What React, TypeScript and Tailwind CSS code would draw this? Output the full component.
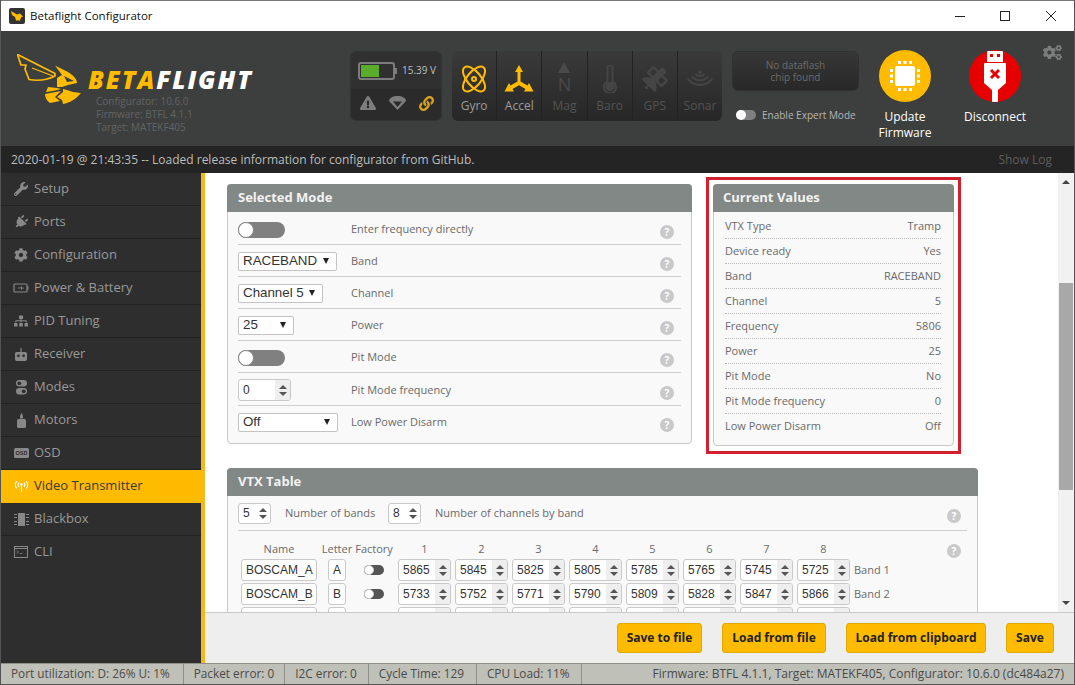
import React from "react";
import { FaWrench, FaPlug, FaCog, FaSitemap, FaExclamationTriangle, FaLink, FaCogs, FaSatellite } from "react-icons/fa";

const Battery = () => (
  <svg width="16" height="12" viewBox="0 0 16 12" fill="none" stroke="currentColor" strokeWidth="1.2">
    <rect x="1" y="2" width="13" height="8" rx="1" />
    <path d="M15 4.500v3" />
    <path d="M5 6h2.500l1-1.500v3l1-1.500h1.500" strokeWidth="0.8" />
  </svg>
);
const Receiver = () => (
  <svg width="12" height="15" viewBox="0 0 14 15" fill="currentColor">
    <rect x="6.300" y="0" width="1.400" height="5" />
    <path d="M2 4.500h10a2 2 0 0 1 2 2V13a2 2 0 0 1-2 2H2a2 2 0 0 1-2-2V6.500a2 2 0 0 1 2-2Z" />
    <circle cx="4" cy="9" r="1.600" fill="#2e2e2e" />
    <circle cx="10" cy="9" r="1.600" fill="#2e2e2e" />
  </svg>
);
const Modes = () => (
  <svg width="13" height="15" viewBox="0 0 13 15" fill="currentColor">
    <rect x="1" y="0" width="11" height="6.600" rx="3.300" />
    <rect x="1" y="8" width="11" height="6.600" rx="3.300" />
    <circle cx="4.300" cy="3.300" r="1.900" fill="#2e2e2e" />
    <circle cx="8.700" cy="11.300" r="1.900" fill="#2e2e2e" />
  </svg>
);
const Motor = () => (
  <svg width="11" height="15" viewBox="0 0 11 15" fill="currentColor">
    <path d="M5.500 0C6.800 1.500 7 3 7 5.500H4C4 3 4.200 1.500 5.500 0Z" />
    <rect x="1" y="6" width="9" height="9" rx="1.500" />
  </svg>
);
const Osd = () => (
  <svg width="15" height="10" viewBox="0 0 15 10">
    <rect x="0" y="0" width="15" height="10" rx="1.500" fill="currentColor" />
    <text x="7.500" y="7" textAnchor="middle" fontSize="5.500" fontWeight="700" fontFamily="Liberation Sans" fill="#2e2e2e">OSD</text>
  </svg>
);
const Vtx = () => (
  <svg width="15" height="12" viewBox="0 0 15 12" fill="none" stroke="currentColor" strokeWidth="1.100">
    <circle cx="7.500" cy="4.500" r="1.200" fill="currentColor" stroke="none" />
    <path d="M7.500 5v7" />
    <path d="M5 2.500a3.500 3.500 0 0 0 0 4.500M10 2.500a3.500 3.500 0 0 1 0 4.500" />
    <path d="M2.800 1a6 6 0 0 0 0 7.500M12.200 1a6 6 0 0 1 0 7.500" />
  </svg>
);
const Blackbox = () => (
  <svg width="15" height="13" viewBox="0 0 15 13" fill="currentColor">
    <rect x="4" y="0" width="7" height="13" rx="0.500" />
    <path d="M0 1h3v1H0zM0 4h3v1H0zM0 8h3v1H0zM0 11h3v1H0zM12 1h3v1h-3zM12 4h3v1h-3zM12 8h3v1h-3zM12 11h3v1h-3z" />
  </svg>
);
const Cli = () => (
  <svg width="14" height="12" viewBox="0 0 14 12" fill="none" stroke="currentColor">
    <rect x="0.500" y="0.500" width="13" height="11" />
    <path d="M0.500 2.500h13" />
    <path d="M2.500 4.500l2 1.500-2 1.500M5.500 7.500h3" strokeWidth="0.700" />
  </svg>
);

const Wasp = () => (
  <svg width="65" height="50" viewBox="0 0 65 50" fill="#ffbb00" className="shrink-0">
    <path d="M0.500 0.500 L38 19.500 L38 22 C30 26 20 27 12 25.500 L8 15 L9 11 L4 11 Z" fill="none" stroke="#ffbb00" strokeWidth="1.700" strokeLinejoin="round" />
    <path d="M15 14 L36 22" fill="none" stroke="#ffbb00" strokeWidth="1.300" />
    <path d="M38 11.500 L51 18 C56 21 60 25 60 29 L51 31 L45 33 L40 33 L40 24 L45 21 Z" />
    <path d="M47 22 L57 27 L50 28 Z" fill="#3d3f3e" />
    <path d="M31 33 L40 34 L44 35 L36 37 L29 38 Z" />
    <path d="M28 40 L44 37 L38 43 L43 47 L33 49 C30 47 28 44 28 40 Z" />
    <path d="M46 35 L50 36 L56 38 L64 39 C60 44 53 49 46 50 L45 46 L40 43 L46 38 Z" />
  </svg>
);

const Thermo = () => (
  <svg width="16" height="28" viewBox="0 0 18 34" fill="none" stroke="#454545" strokeWidth="2.400">
    <path d="M6 3a3 3 0 0 1 6 0v17a7.500 7.500 0 1 1-6 0Z" />
    <circle cx="9" cy="26" r="4.500" fill="#454545" />
  </svg>
);
const Accel = () => (
  <svg width="30" height="28" viewBox="0 0 30 28" fill="#ffbb00">
    <path d="M15 0l4 7h-2.500v9.500l7 4 1.500-2.500 4.500 8.500H20l1.500-2.500-6.500-3.700-6.500 3.700L10 26.500H.5L5 18l1.500 2.500 7-4V7H11Z" />
  </svg>
);
const Compass = () => (
  <div className="flex flex-col items-center -mt-[3px]">
    <div className="w-0 h-0 border-l-[6px] border-r-[6px] border-b-[11px] border-l-transparent border-r-transparent border-b-[#4a4a4a]" />
    <span className="mt-[1px] text-[18px] leading-[20px] text-[#4a4a4a]">N</span>
  </div>
);
const Sonar = () => (
  <svg width="28" height="21" viewBox="0 0 30 22" fill="none" stroke="#454545" strokeWidth="2.200">
    <circle cx="15" cy="3" r="2" fill="#454545" stroke="none" />
    <path d="M10 5c2 3 8 3 10 0" />
    <path d="M6 8c4 5 14 5 18 0" />
    <path d="M2 10c6 9 20 9 26 0" />
  </svg>
);
const Parachute = () => (
  <svg width="17" height="14" viewBox="0 0 17 14" fill="#7d7d7d">
    <path d="M8.500 0C13 0 17 2 17 5l-8.500 9L0 5C0 2 4 0 8.500 0Z" />
    <path d="M4 5.500h9L8.500 11Z" fill="#2a2a2a" />
  </svg>
);
const Chip = () => (
  <svg width="30" height="30" viewBox="0 0 30 30" fill="#fff">
    <rect x="5" y="5" width="20" height="20" rx="2" />
    <path d="M8 0h3v3H8zM13.500 0h3v3h-3zM19 0h3v3h-3zM8 27h3v3H8zM13.500 27h3v3h-3zM19 27h3v3h-3zM0 8h3v3H0zM0 13.500h3v3H0zM0 19h3v3H0zM27 8h3v3h-3zM27 13.500h3v3h-3zM27 19h3v3h-3z" />
  </svg>
);
const Usb = () => (
  <svg width="24" height="52" viewBox="0 0 24 52" fill="#fff">
    <path d="M4 1h16v11H4Z M7 4v3h3V4Z M14 4v3h3V4Z" fillRule="evenodd" />
    <path d="M2 13h20a1 1 0 0 1 1 1v19l-8 7v12h-6V40l-8-7V14a1 1 0 0 1 1-1Z" />
    <path d="M8 20l8 8M16 20l-8 8" stroke="#e60000" strokeWidth="3" />
  </svg>
);

const Help = ({ className = "" }: { className?: string }) => (
  <div className={`w-[14px] h-[14px] rounded-full bg-[#c9c9c9] text-white text-[10px] leading-[14px] font-bold text-center shrink-0 ${className}`}>?</div>
);

const Toggle = () => (
  <div className="w-[47px] h-[16px] rounded-full bg-[#808080] flex items-center">
    <div className="w-[16px] h-[16px] rounded-full bg-white border border-[#8a8a8a]" />
  </div>
);

const MiniToggle = () => (
  <div className="w-[20px] h-[10px] rounded-full flex items-center bg-[#555]">
    <div className="w-[10px] h-[10px] rounded-full bg-white border border-[#ccc]" />
  </div>
);

const Select = ({ value, w }: { value: string; w: string }) => (
  <div className={`${w} h-[19px] border border-[#c4c4c4] rounded-[2px] bg-white pl-[4px] pr-[7px] flex items-center justify-between font-['Liberation_Sans'] text-[13.33px] text-[#333] mb-[1px]`}>
    <span>{value}</span>
    <span className="w-0 h-0 border-l-[3px] border-r-[3px] border-t-[6px] border-l-transparent border-r-transparent border-t-[#222]" />
  </div>
);

const Arrows = ({ bg = "bg-[#eeeeee]" }: { bg?: string }) => (
  <div className={`w-[15px] self-stretch ${bg} flex flex-col items-center justify-center gap-[3px] rounded-r-[3px]`}>
    <span className="w-0 h-0 border-l-[4px] border-r-[4px] border-b-[4px] border-l-transparent border-r-transparent border-b-[#555]" />
    <span className="w-0 h-0 border-l-[4px] border-r-[4px] border-t-[4px] border-l-transparent border-r-transparent border-t-[#555]" />
  </div>
);

const Spin = ({ value, w, h = "h-[22px]", bg }: { value: string; w: string; h?: string; bg?: string }) => (
  <div className={`${w} ${h} shrink-0 border border-[#c9c9c9] rounded-[3px] bg-white flex items-center justify-between pl-[4px] font-['Liberation_Sans'] text-[12px] text-[#333]`}>
    <span>{value}</span>
    <Arrows bg={bg} />
  </div>
);

const Panel = ({ title, className, titlePad = "pl-[11px]", children }: { title: string; className: string; titlePad?: string; children: React.ReactNode }) => (
  <div className={`${className} shrink-0 border border-[#c8c8c8] rounded-[4px] bg-[#f9f9f9]`}>
    <div className={`h-[28px] -mt-px -mx-px bg-[#828885] rounded-t-[4px] ${titlePad} flex items-center text-[13px] font-bold text-[#f2f2f2]`}>{title}</div>
    {children}
  </div>
);

const modes: [React.ReactNode, string][] = [
  [<Toggle />, "Enter frequency directly"],
  [<Select value="RACEBAND" w="w-[99px]" />, "Band"],
  [<Select value="Channel 5" w="w-[85px]" />, "Channel"],
  [<Select value="25" w="w-[56px]" />, "Power"],
  [<Toggle />, "Pit Mode"],
  [<Spin value="0" w="w-[53px]" />, "Pit Mode frequency"],
  [<Select value="Off" w="w-[100px]" />, "Low Power Disarm"],
];

const values = [
  ["VTX Type", "Tramp"],
  ["Device ready", "Yes"],
  ["Band", "RACEBAND"],
  ["Channel", "5"],
  ["Frequency", "5806"],
  ["Power", "25"],
  ["Pit Mode", "No"],
  ["Pit Mode frequency", "0"],
  ["Low Power Disarm", "Off"],
];

const bands = [
  { name: "BOSCAM_A", letter: "A", f: ["5865", "5845", "5825", "5805", "5785", "5765", "5745", "5725"], label: "Band 1" },
  { name: "BOSCAM_B", letter: "B", f: ["5733", "5752", "5771", "5790", "5809", "5828", "5847", "5866"], label: "Band 2" },
  { name: "", letter: "", f: ["", "", "", "", "", "", "", ""], label: "" },
];

const nav: [React.ReactNode, string][] = [
  [<FaWrench size={14} />, "Setup"],
  [<FaPlug size={14} className="rotate-45" />, "Ports"],
  [<FaCog size={14} />, "Configuration"],
  [<Battery />, "Power & Battery"],
  [<FaSitemap size={14} />, "PID Tuning"],
  [<Receiver />, "Receiver"],
  [<Modes />, "Modes"],
  [<Motor />, "Motors"],
  [<Osd />, "OSD"],
  [<Vtx />, "Video Transmitter"],
  [<Blackbox />, "Blackbox"],
  [<Cli />, "CLI"],
];

const sensors: [React.ReactNode, string, boolean][] = [
  [
    <svg width="28" height="30" viewBox="0 0 28 30" fill="none" stroke="#ffbb00" strokeWidth="2">
      <ellipse cx="14" cy="15" rx="7" ry="15" transform="rotate(-40 14 15)" />
      <ellipse cx="14" cy="15" rx="7" ry="15" transform="rotate(40 14 15)" />
      <circle cx="14" cy="15" r="2" />
    </svg>,
    "Gyro",
    true,
  ],
  [<Accel />, "Accel", true],
  [<Compass />, "Mag", false],
  [<Thermo />, "Baro", false],
  [<FaSatellite size={26} color="#454545" />, "GPS", false],
  [<Sonar />, "Sonar", false],
];

const actions: [string, string][] = [
  ["Save to file", "w-[85px]"],
  ["Load from file", "w-[104px]"],
  ["Load from clipboard", "w-[140px]"],
  ["Save", "w-[48px]"],
];

const stats: [string, string][] = [
  ["Port utilization: D: 26% U: 1%", "pr-[13px]"],
  ["Packet error: 0", "pr-[10px]"],
  ["I2C error: 0", "pr-[11px]"],
  ["Cycle Time: 129", "pr-[12px]"],
  ["CPU Load: 11%", "pr-[11px]"],
];

export default function App() {
  return (
    <div className="w-[1075px] h-[685px] flex flex-col overflow-hidden bg-white border-x border-b border-[#555] font-['Open_Sans',sans-serif]">
      <div className="h-[31px] shrink-0 border-t border-[#777] bg-white flex items-center pl-[8px]">
        <div className="w-[16px] h-[16px] bg-[#333] rounded-[2px] flex items-center justify-center">
          <svg width="12" height="10" viewBox="0 0 12 10" fill="#ffbb00"><path d="M0 0l6 3.500 3-1 3 3-2 1-1 3H5L4 6 1 4Z" /></svg>
        </div>
        <span className="ml-[5px] text-[11.500px] text-[#111]">Betaflight Configurator</span>
        <div className="ml-auto flex items-center mr-[18px]">
          <div className="w-[10px] h-px bg-[#222]" />
          <div className="ml-[35px] w-[10px] h-[10px] border border-[#222]" />
          <svg className="ml-[36px]" width="10" height="10" viewBox="0 0 10 10" stroke="#222"><path d="M0 0l10 10M10 0L0 10" /></svg>
        </div>
      </div>

      <div className="h-[115px] shrink-0 bg-[#3d3f3e] flex items-start">
        <div className="w-[349px] shrink-0 pl-[16px] pt-[23px] flex">
          <Wasp />
          <div className="pl-[6px] pt-[15px]">
            <div className="text-[25px] leading-[20px] font-extrabold italic tracking-[1.900px] whitespace-nowrap">
              <span className="text-[#ffbb00]">BETA</span><span className="text-white">FLIGHT</span>
            </div>
            <div className="ml-[8px] mt-[6px] text-[10px] leading-[13px] text-[#626463]">
              <div>Configurator: 10.6.0</div>
              <div>Firmware: BTFL 4.1.1</div>
              <div>Target: MATEKF405</div>
            </div>
          </div>
        </div>

        <div className="mt-[20px] w-[92px] h-[70px] shrink-0 rounded-[6px] bg-[#2b2b2b] border border-[#333] overflow-hidden flex flex-col">
          <div className="h-[37px] bg-[#303030] flex items-center pl-[7px]">
            <div className="w-[37px] h-[18px] border-2 border-[#7d7d7d] rounded-[3px] p-[1px]">
              <div className="w-[18px] h-full bg-[#59ad2a]" />
            </div>
            <div className="w-[2px] h-[6px] bg-[#7d7d7d]" />
            <span className="ml-[5px] text-[10px] text-[#bdbdbd]">15.39 V</span>
          </div>
          <div className="flex-1 flex items-center pl-[9px] gap-[13px] pb-[3px]">
            <FaExclamationTriangle size={16} color="#7d7d7d" />
            <Parachute />
            <FaLink size={15} color="#d9a21b" />
          </div>
        </div>

        <div className="mt-[20px] ml-[10px] w-[270px] h-[70px] shrink-0 rounded-[6px] bg-gradient-to-b from-[#3a3a3a] to-[#272727] flex overflow-hidden">
          {sensors.map(([icon, name, on], i) => (
            <div key={name} className={`flex-1 flex flex-col items-center ${i ? "border-l border-[#222]" : ""}`}>
              <div className="h-[38px] mt-[9px] flex items-center justify-center">{icon}</div>
              <span className={`text-[12px] leading-[16px] ${on ? "text-[#9c9c9c]" : "text-[#535353]"}`}>{name}</span>
            </div>
          ))}
        </div>

        <div className="ml-[10px] w-[127px] shrink-0 mt-[20px]">
          <div className="h-[40px] rounded-[6px] bg-gradient-to-b from-[#373737] to-[#282828] border border-[#303030] flex items-center justify-center text-center text-[10px] leading-[12px] text-[#6b6b6b]">
            No dataflash<br />chip found
          </div>
          <div className="mt-[14px] pl-[4px] flex items-center h-[20px]">
            <div className="w-[20px] h-[10px] rounded-full bg-[#808080] flex items-center">
              <div className="w-[10px] h-[10px] rounded-full bg-white" />
            </div>
            <span className="ml-[6px] text-[10px] text-[#b5b5b5] whitespace-nowrap">Enable Expert Mode</span>
          </div>
        </div>

        <div className="ml-[1px] w-[90px] shrink-0 mt-[19px] flex flex-col items-center">
          <div className="w-[52px] h-[52px] rounded-full bg-[#ffbb00] flex items-center justify-center"><Chip /></div>
          <div className="mt-[7px] text-[12px] leading-[16px] text-white text-center">Update<br />Firmware</div>
        </div>
        <div className="w-[90px] shrink-0 mt-[19px] flex flex-col items-center">
          <div className="w-[52px] h-[52px] rounded-full bg-[#e60000] flex items-center justify-center overflow-hidden"><Usb /></div>
          <div className="mt-[7px] text-[12px] leading-[16px] text-white text-center">Disconnect</div>
        </div>
        <FaCogs size={19} color="#7d7d7d" className="mt-[12px] ml-[3px]" />
      </div>

      <div className="h-[27px] shrink-0 bg-[#242424] flex items-center justify-between pl-[10px] pr-[22px] text-[12px]">
        <span className="text-[#bdbdbd]">2020-01-19 @ 21:43:35 -- Loaded release information for configurator from GitHub.</span>
        <span className="text-[#5e5e5e]">Show Log</span>
      </div>

      <div className="flex-1 min-h-0 flex">
        <div className="w-[200px] shrink-0 bg-[#2e2e2e]">
          {nav.map(([icon, label]) => {
            const active = label === "Video Transmitter";
            const last = label === "CLI";
            return (
              <div key={label} className={`${last ? "h-[31px]" : "h-[33px] border-b"} flex items-center ${active ? "bg-[#ffbb00] border-[#ffbb00] text-[#3a3a3a]" : "border-[#222] text-[#999]"}`}>
                <div className={`w-[33px] pl-[7px] flex justify-center shrink-0 ${active ? "text-white" : "text-[#888]"}`}>{icon}</div>
                <span className="text-[13px]">{label}</span>
              </div>
            );
          })}
        </div>
        <div className="w-[4px] shrink-0 bg-[#f2b91d]" />

        <div className="flex-1 min-w-0 flex flex-col">
          <div className="flex-1 min-h-0 flex">
            <div className="flex-1 min-w-0 overflow-hidden bg-white pt-[11px] pl-[22px]">
              <div className="flex items-start gap-[21px]">
                <Panel title="Selected Mode" className="w-[465px] h-[260px]">
                  <div className="px-[10px] pt-[1px]">
                    {modes.map(([ctl, label], i) => (
                      <div key={label} className={`${i === 5 ? "h-[33px]" : i === 6 ? "h-[31px]" : "h-[32px]"} pt-[2px] flex items-center ${i < 6 ? "border-b border-[#cfcfcf]" : ""}`}>
                        <div className="w-[113px] shrink-0 flex items-center">{ctl}</div>
                        <span className="flex-1 text-[11px] text-[#6a6a6a]">{label}</span>
                        <Help className="mr-[7px] mt-[5px]" />
                      </div>
                    ))}
                  </div>
                </Panel>
                <div className="relative shrink-0">
                  <Panel title="Current Values" titlePad="pl-[10px]" className="w-[241px] h-[262px]">
                    <div className="pl-[11px] pr-[12px] pt-[2px]">
                      {values.map(([k, v], i) => (
                        <div key={k} className={`h-[25px] flex items-center justify-between text-[11px] text-[#6a6a6a] ${i < 8 ? "border-b border-dotted border-[#bbb]" : ""}`}>
                          <span>{k}</span>
                          <span>{v}</span>
                        </div>
                      ))}
                    </div>
                  </Panel>
                  <div className="absolute -left-[7px] -right-[7px] -top-[7px] -bottom-[8px] border-[3px] border-[#d2202f]" />
                </div>
              </div>

              <Panel title="VTX Table" className="w-[751px] h-[240px] mt-[22px]">
                <div className="px-[10px]">
                  <div className="h-[35px] flex items-center border-b border-[#cfcfcf] text-[11px] text-[#6a6a6a]">
                    <Spin value="5" w="w-[33px]" h="h-[21px]" bg="bg-transparent" />
                    <span className="ml-[14px] w-[103px] whitespace-nowrap">Number of bands</span>
                    <Spin value="8" w="w-[33px]" h="h-[21px]" bg="bg-transparent" />
                    <span className="ml-[14px]">Number of channels by band</span>
                    <Help className="ml-auto mr-[6px] mt-[5px]" />
                  </div>
                  <div className="pl-[3px]">
                    <div className="h-[28px] pt-[8px] flex items-center gap-[4px] text-[11px] text-[#6a6a6a]">
                      <div className="w-[76px] flex justify-center mr-[7px]">Name</div>
                      <div className="w-[18px] flex justify-center mr-[14px]"><span>Letter</span></div>
                      <div className="w-[20px] flex justify-center mr-[10px] whitespace-nowrap">Factory</div>
                      {[1, 2, 3, 4, 5, 6, 7, 8].map((n) => (
                        <div key={n} className="w-[53px] text-center">{n}</div>
                      ))}
                      <Help className="ml-auto mr-[6px] mt-[4px]" />
                    </div>
                    <div className="flex flex-col gap-[2px]">
                      {bands.map((b, i) => (
                        <div key={i} className="h-[22px] flex items-center gap-[4px]">
                          <div className="w-[76px] h-[22px] shrink-0 mr-[7px] border border-[#c9c9c9] rounded-[3px] bg-white pl-[4px] flex items-center font-['Liberation_Sans'] text-[12px] text-[#333]">{b.name}</div>
                          <div className="w-[18px] h-[22px] shrink-0 mr-[14px] border border-[#c9c9c9] rounded-[3px] bg-white pl-[4px] flex items-center font-['Liberation_Sans'] text-[12px] text-[#333]">{b.letter}</div>
                          <div className="w-[20px] shrink-0 mr-[10px]">{b.name && <MiniToggle />}</div>
                          {b.f.map((v, j) => (
                            <Spin key={j} value={v} w="w-[53px]" />
                          ))}
                          <span className="text-[11px] text-[#6a6a6a]">{b.label}</span>
                        </div>
                      ))}
                    </div>
                  </div>
                </div>
              </Panel>
            </div>

            <div className="w-[16px] shrink-0 bg-[#f1f1f1] flex flex-col items-center">
              <span className="mt-[7px] w-0 h-0 border-l-[4px] border-r-[4px] border-b-[4px] border-l-transparent border-r-transparent border-b-[#444]" />
              <div className="mt-[99px] w-[14px] h-[207px] bg-[#a8a8a8]" />
              <span className="mt-auto mb-[7px] w-0 h-0 border-l-[4px] border-r-[4px] border-t-[4px] border-l-transparent border-r-transparent border-t-[#444]" />
            </div>
          </div>

          <div className="h-[51px] shrink-0 bg-[#eeeeee] border-t border-[#c9c9c9] flex items-center justify-end gap-[20px] pr-[20px]">
            {actions.map(([b, w]) => (
              <div key={b} className={`${w} h-[30px] flex items-center justify-center rounded-[3px] bg-[#ffbb00] border border-[#e0a800] text-[12px] font-bold text-[#222] whitespace-nowrap`}>{b}</div>
            ))}
          </div>
        </div>
      </div>

      <div className="h-[21px] shrink-0 bg-[#bfc0b7] border-t border-[#8f908a] flex items-center text-[12px] text-[#4a4a4a]">
        {stats.map(([s, pr]) => (
          <div key={s} className={`h-full pl-[10px] ${pr} flex items-center border-r border-[#8f908a] whitespace-nowrap text-[11.800px]`}>{s}</div>
        ))}
        <span className="ml-auto pr-[10px] whitespace-nowrap">Firmware: BTFL 4.1.1, Target: MATEKF405, Configurator: 10.6.0 (dc484a27)</span>
      </div>
    </div>
  );
}
